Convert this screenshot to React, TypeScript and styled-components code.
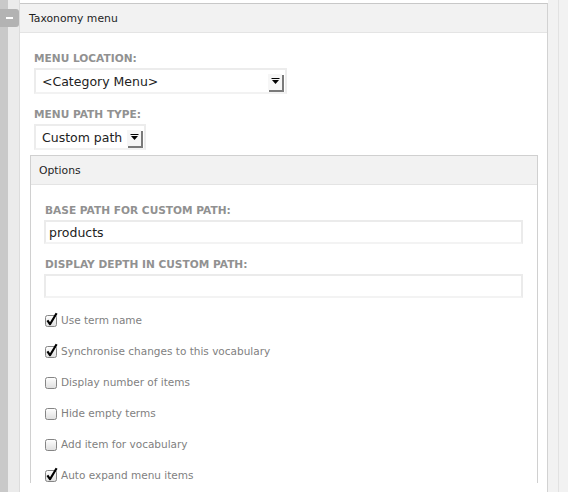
import React from "react";
import styled, { createGlobalStyle } from "styled-components";

const GlobalStyle = createGlobalStyle`
  html, body {
    margin: 0;
    padding: 0;
    background: #ffffff;
    font-family: "DejaVu Sans", "Open Sans", sans-serif;
  }
`;

const Page = styled.div`
  display: flex;
  width: 568px;
  height: 492px;
  overflow: hidden;
  background: #fff;
`;

const LeftRail = styled.div`
  position: relative;
  width: 20px;
  flex-shrink: 0;
  background: linear-gradient(
    to right,
    #c9c9c9 0,
    #c9c9c9 8px,
    #ebebeb 8px,
    #ebebeb 19px,
    #dcdcdc 19px
  );
`;

/* collapse tab sitting over the rail */
const CollapseTab = styled.div`
  position: absolute;
  left: 0;
  top: 9px;
  width: 19px;
  height: 18px;
  background: #b3b3b3;
  border-radius: 0 3px 3px 0;
  display: flex;
  align-items: center;
  justify-content: center;

  &::after {
    content: "";
    width: 7px;
    height: 2px;
    background: #fff;
  }
`;

const RightRail = styled.div`
  width: 20px;
  flex-shrink: 0;
  background: linear-gradient(
    to right,
    #f2f2f2 0,
    #f2f2f2 10px,
    #e2e2e2 10px,
    #e2e2e2 11px,
    #f2f2f2 11px
  );
`;

const Panel = styled.div`
  flex: 1;
  margin-top: 3px;
  border-top: 1px solid #c8c8c8;
  border-right: 1px solid #d2d2d2;
  background: #fff;
  display: flex;
  flex-direction: column;
`;

const Header = styled.div<{ $pad: number }>`
  height: 28px;
  flex-shrink: 0;
  background: #f2f2f2;
  border-bottom: 1px solid #e4e4e4;
  display: flex;
  align-items: center;
  padding-left: ${(p) => p.$pad}px;
  font-size: 10.8px;
  color: #1e1e1e;
`;

const Body = styled.div`
  padding: 18px 9px 0 10px;
  display: flex;
  flex-direction: column;
`;

const Group = styled.div`
  padding-left: 4px;
  display: flex;
  flex-direction: column;
  align-items: flex-start;
`;

const Label = styled.div<{ $gap?: number }>`
  font-size: 10.6px;
  font-weight: bold;
  line-height: 14px;
  color: #919191;
  text-transform: uppercase;
  white-space: nowrap;
  margin-top: ${(p) => p.$gap ?? 0}px;
  margin-bottom: 3px;
`;

const SelectBox = styled.div<{ $width: number }>`
  width: ${(p) => p.$width}px;
  height: 26px;
  box-sizing: border-box;
  border: 2px solid #ececec;
  border-bottom-color: #f2f2f2;
  display: flex;
  align-items: center;
  justify-content: space-between;
  padding: 0 2px 0 6px;
  font-size: 12.5px;
  color: #222;
  background: #fff;
  white-space: nowrap;
`;

const ArrowButton = styled.span`
  width: 15px;
  height: 17px;
  box-sizing: border-box;
  background: #f6f6f6;
  border-left: 1px solid #fff;
  border-top: 1px solid #fff;
  box-shadow: 2px 2px 0 #7a7a7a;
  display: flex;
  align-items: center;
  justify-content: center;
  margin-right: 1px;
  flex-shrink: 0;
`;

const Fieldset = styled.div`
  margin-top: 5px;
  border: 1px solid #d0d0d0;
  border-bottom: none;
  display: flex;
  flex-direction: column;
`;

const FieldsetBody = styled.div`
  padding: 18px 14px 0 14px;
  display: flex;
  flex-direction: column;
`;

const TextInput = styled.div`
  height: 24px;
  box-sizing: border-box;
  border: 2px solid #ebebeb;
  border-bottom-color: #f3f3f3;
  display: flex;
  align-items: center;
  padding-left: 3px;
  font-size: 12.5px;
  color: #222;
  margin-left: -1px;
`;

const CheckList = styled.div`
  margin-top: 14px;
  display: flex;
  flex-direction: column;
  gap: 15px;
`;

const CheckRow = styled.label`
  display: flex;
  align-items: center;
  height: 16px;
  gap: 2px;
  font-size: 10.5px;
  color: #7f7f7f;
  white-space: nowrap;
`;

const Arrow = () => (
  <svg width="9" height="7" viewBox="0 0 9 7">
    <rect x="0.5" y="0" width="8" height="1" fill="#000" />
    <path d="M1 2 H8 L4.5 6 Z" fill="#000" />
  </svg>
);

const Checkbox = ({ checked }: { checked: boolean }) => (
  <svg width="14" height="16" viewBox="0 0 14 16">
    <defs>
      <linearGradient id="cbg" x1="0" y1="0" x2="0" y2="1">
        <stop offset="0" stopColor="#ffffff" />
        <stop offset="1" stopColor="#dedede" />
      </linearGradient>
    </defs>
    <rect x="0.5" y="3.5" width="11" height="11" rx="2" fill="url(#cbg)" stroke="#858585" />
    {checked && (
      <path
        d="M2.4 8.4 L5 12.2 L11.6 1.2"
        fill="none"
        stroke="#000"
        strokeWidth="2.2"
        strokeLinejoin="round"
      />
    )}
  </svg>
);

const options = [
  { label: "Use term name", checked: true },
  { label: "Synchronise changes to this vocabulary", checked: true },
  { label: "Display number of items", checked: false },
  { label: "Hide empty terms", checked: false },
  { label: "Add item for vocabulary", checked: false },
  { label: "Auto expand menu items", checked: true },
];

export default function App() {
  return (
    <>
      <GlobalStyle />
      <Page>
        <LeftRail>
          <CollapseTab />
        </LeftRail>
        <Panel>
          <Header $pad={9}>Taxonomy menu</Header>
          <Body>
            <Group>
              <Label>Menu location:</Label>
              <SelectBox $width={253}>
                <span>&lt;Category Menu&gt;</span>
                <ArrowButton>
                  <Arrow />
                </ArrowButton>
              </SelectBox>
              <Label $gap={13}>Menu path type:</Label>
              <SelectBox $width={112}>
                <span>Custom path</span>
                <ArrowButton>
                  <Arrow />
                </ArrowButton>
              </SelectBox>
            </Group>

            {/* options fieldset */}
            <Fieldset>
              <Header $pad={8}>Options</Header>
              <FieldsetBody>
                <Label>Base path for custom path:</Label>
                <TextInput>products</TextInput>
                <Label $gap={13}>Display depth in custom path:</Label>
                <TextInput />
                <CheckList>
                  {options.map((o) => (
                    <CheckRow key={o.label}>
                      <Checkbox checked={o.checked} />
                      {o.label}
                    </CheckRow>
                  ))}
                </CheckList>
              </FieldsetBody>
            </Fieldset>
          </Body>
        </Panel>
        <RightRail />
      </Page>
    </>
  );
}
